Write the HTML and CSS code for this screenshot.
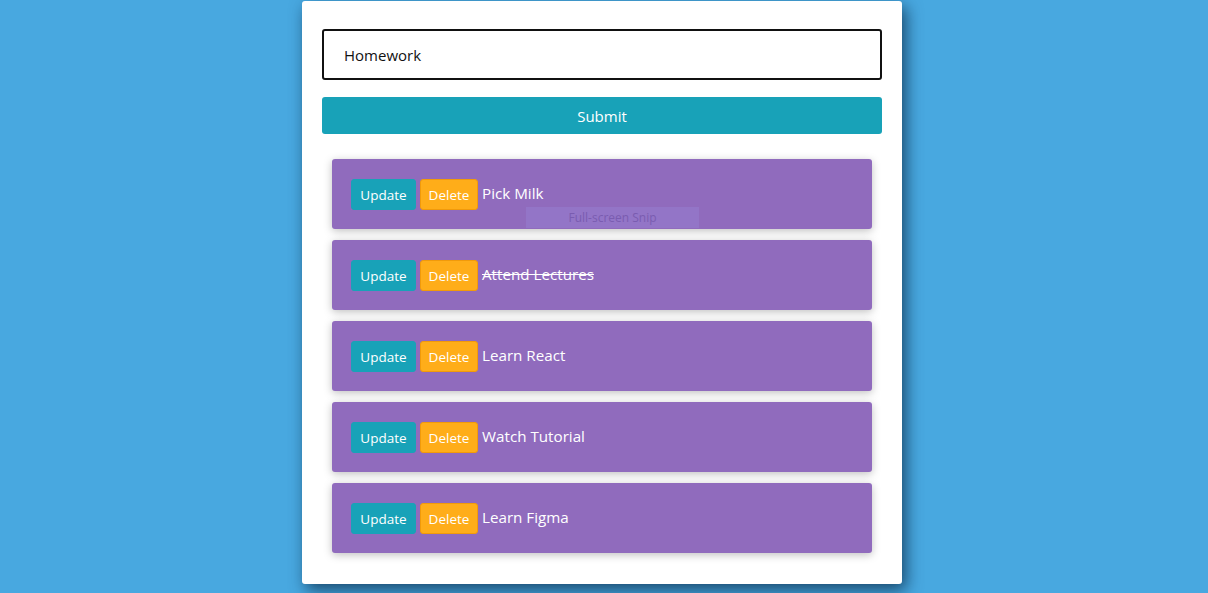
FILE: index.html
```html
<!DOCTYPE html>
<html lang="en">
<head>
<meta charset="utf-8">
<title>Todo</title>
<link rel="stylesheet" href="styles.css">
</head>
<body>
<main class="card">
  <form class="form">
    <input class="field" type="text" value="Homework" autofocus>
    <button class="submit" type="button">Submit</button>
  </form>
  <ul class="list">
    <li class="item">
      <button class="btn btn-update" type="button">Update</button>
      <button class="btn btn-delete" type="button">Delete</button>
      <span class="label">Pick Milk</span>
      <div class="snip">Full-screen Snip</div>
    </li>
    <li class="item">
      <button class="btn btn-update" type="button">Update</button>
      <button class="btn btn-delete" type="button">Delete</button>
      <span class="label done">Attend Lectures</span>
    </li>
    <li class="item">
      <button class="btn btn-update" type="button">Update</button>
      <button class="btn btn-delete" type="button">Delete</button>
      <span class="label">Learn React</span>
    </li>
    <li class="item">
      <button class="btn btn-update" type="button">Update</button>
      <button class="btn btn-delete" type="button">Delete</button>
      <span class="label">Watch Tutorial</span>
    </li>
    <li class="item">
      <button class="btn btn-update" type="button">Update</button>
      <button class="btn btn-delete" type="button">Delete</button>
      <span class="label">Learn Figma</span>
    </li>
  </ul>
</main>
</body>
</html>
```
FILE: styles.css
```css
* { box-sizing: border-box; }
html, body { height: 100%; }
body {
  margin: 0;
  padding: 1px 4px 0 0;
  background: #48a8e0;
  font-family: "Open Sans", "Noto Sans", sans-serif;
}
.card {
  width: 600px;
  margin: 0 auto;
  background: #fff;
  border-radius: 3px;
  padding: 28px 20px 31px;
  box-shadow: 4px 6px 16px rgba(10, 40, 70, 0.75);
}
.form {
  display: flex;
  flex-direction: column;
  gap: 17px;
}
.field {
  height: 51px;
  width: 100%;
  border: 2px solid #111;
  border-radius: 3px;
  padding: 0 20px;
  font-family: inherit;
  font-size: 15px;
  color: #111;
  outline: none;
}
.submit {
  height: 37px;
  border: none;
  border-radius: 3px;
  background: #18a2b8;
  color: #fff;
  font-family: inherit;
  font-size: 15px;
}
.list {
  list-style: none;
  margin: 25px 10px 0;
  padding: 0;
  display: flex;
  flex-direction: column;
  gap: 11px;
}
.item {
  position: relative;
  height: 70px;
  background: #906bbd;
  border-radius: 3px;
  padding: 20px 19px;
  display: flex;
  align-items: flex-start;
  gap: 4px;
  box-shadow: 0 2px 8px rgba(0, 0, 0, 0.25);
}
.btn {
  height: 31px;
  border-radius: 3px;
  font-family: inherit;
  font-size: 13.5px;
  color: #fff;
  padding: 0 4px;
}
.btn-update {
  width: 65px;
  background: #18a2b8;
  border: 1px solid #18a2b8;
}
.btn-delete {
  width: 58px;
  background: #ffad19;
  border: 1px solid #f19a0a;
}
.label {
  color: #fff;
  font-size: 15.2px;
  line-height: 28px;
}
.done { text-decoration: line-through; }
.snip {
  position: absolute;
  left: 194px;
  top: 48px;
  width: 173px;
  height: 21px;
  background: rgba(150, 130, 210, 0.45);
  color: #7a5cb0;
  font-size: 12px;
  line-height: 21px;
  text-align: center;
}
```
